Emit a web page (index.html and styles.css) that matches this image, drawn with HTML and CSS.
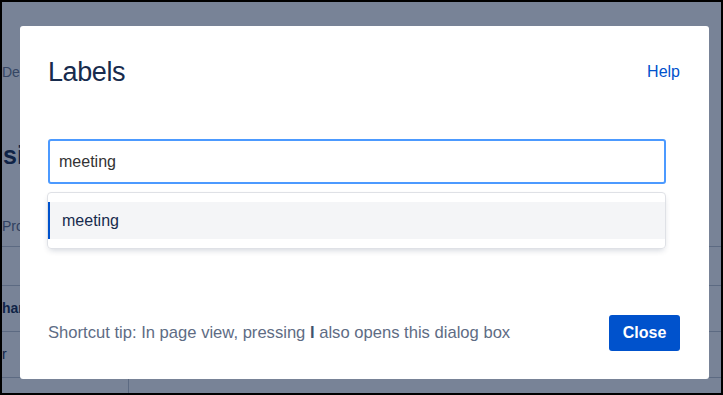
FILE: index.html
```html
<!DOCTYPE html>
<html lang="en">
<head>
    <meta charset="UTF-8">
    <meta name="viewport" content="width=device-width, initial-scale=1.0">
    <title>Labels</title>
    <link rel="stylesheet" href="styles.css">
</head>
<body>

    <div class="screen">

        <!-- Page behind the dialog (only its left edge peeks out) -->
        <div class="page">
            <div class="breadcrumb">Dem</div>
            <h1 class="page-title">sit</h1>
            <div class="table">
                <div class="row head">Pro</div>
                <div class="row empty"></div>
                <div class="row strong">har</div>
                <div class="row">r</div>
            </div>
            <div class="page-bottom"><span class="cell"></span></div>
        </div>

        <!-- Labels dialog -->
        <div class="overlay">
            <div class="dialog">
                <div class="dialog-header">
                    <h2 class="dialog-title">Labels</h2>
                    <a class="help-link" href="#">Help</a>
                </div>

                <input class="label-input" type="text" value="meeting">

                <div class="suggestions">
                    <div class="suggestion active">meeting</div>
                </div>

                <div class="dialog-footer">
                    <p class="tip">Shortcut tip: In page view, pressing <b>l</b> also opens this dialog box</p>
                    <button class="close-btn">Close</button>
                </div>
            </div>
        </div>

    </div>

</body>
</html>
```

FILE: styles.css
```css
/* Base */
body {
    margin: 0;
    font-family: "Liberation Sans", Arial, sans-serif;
    color: #172b4d;
}

/* Screenshot frame */
.screen {
    width: 723px;
    height: 395px;
    box-sizing: border-box;
    border: 2px solid #000;
    position: relative;
    overflow: hidden;
    background: #fff;
}

/* Page behind the modal */
.page {
    white-space: nowrap;
    padding-top: 62px;
}

.breadcrumb {
    font-size: 14px;
    color: #6b778c;
    line-height: 16px;
}

.page-title {
    margin: 58px 0 0 1px;
    font-size: 25px;
    font-weight: 600;
    line-height: 34px;
}

.table {
    margin-top: 34px;
}

.row {
    height: 45px;
    line-height: 45px;
    font-size: 14px;
    border-bottom: 1px solid #c1c7d0;
}

.row.head {
    height: 40px;
    line-height: 40px;
    color: #5e6c84;
}

.row.empty {
    height: 38px;
}

.row.strong {
    font-weight: bold;
}

.page-bottom {
    display: flex;
    height: 20px;
}

.cell {
    width: 126px;
    border-right: 1px solid #c1c7d0;
}

/* Dim layer */
.overlay {
    position: absolute;
    inset: 0;
    background: rgba(9, 30, 66, 0.55);
    padding: 24px 0 0 18px;
}

/* Dialog */
.dialog {
    width: 689px;
    height: 353px;
    box-sizing: border-box;
    background: #fff;
    border-radius: 3px;
    padding: 28px 29px 28px 28px;
    display: flex;
    flex-direction: column;
}

.dialog-header {
    display: flex;
    justify-content: space-between;
    align-items: center;
    height: 36px;
}

.dialog-title {
    margin: 0;
    font-size: 27px;
    font-weight: normal;
    letter-spacing: -0.4px;
    color: #172b4d;
}

.help-link {
    font-size: 16px;
    color: #0052cc;
    text-decoration: none;
}

.label-input {
    width: 618px;
    margin-top: 49px;
    height: 45px;
    box-sizing: border-box;
    border: 2px solid #4c9aff;
    border-radius: 3px;
    padding: 0 9px;
    font-family: inherit;
    font-size: 16px;
    color: #333;
    outline: none;
}

.suggestions {
    width: 619px;
    box-sizing: border-box;
    margin: 8px 0 0 -1px;
    border: 1px solid #dfe1e6;
    border-radius: 4px;
    padding: 9px 0;
    box-shadow: 0 3px 6px -2px rgba(9, 30, 66, 0.2);
}

.suggestion {
    height: 37px;
    line-height: 37px;
    padding-left: 12px;
    font-size: 16px;
    color: #172b4d;
}

.suggestion.active {
    background: #f4f5f7;
    border-left: 2px solid #0052cc;
}

.dialog-footer {
    margin-top: auto;
    display: flex;
    justify-content: space-between;
    align-items: center;
}

.tip {
    margin: 0;
    font-size: 16.6px;
    color: #5e6c84;
}

.tip b {
    color: #42526e;
}

.close-btn {
    width: 71px;
    height: 36px;
    border: none;
    border-radius: 3px;
    background: #0052cc;
    color: #fff;
    font-family: inherit;
    font-size: 16px;
    font-weight: bold;
    cursor: pointer;
}
```
